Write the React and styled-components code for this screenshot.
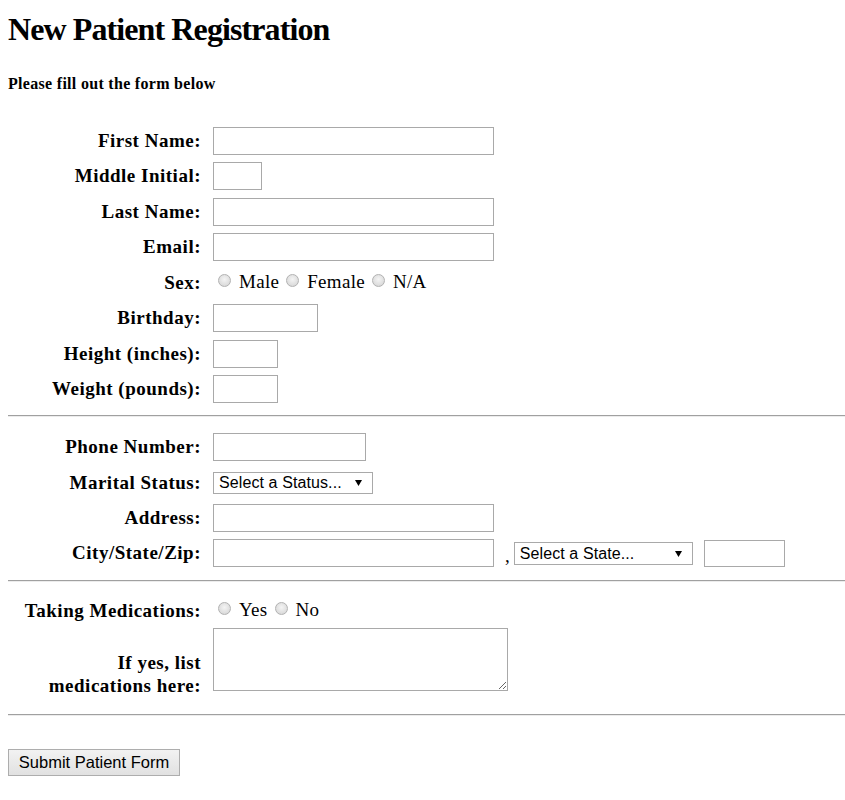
import React from 'react'
import styled, { createGlobalStyle } from 'styled-components'

const GlobalStyle = createGlobalStyle`
  html, body {
    overflow: visible;
  }
  body {
    margin: 8px 0 8px 8px;
    background: #fff;
    color: #000;
    font-family: "Liberation Serif", "Times New Roman", serif;
  }
`

const Title = styled.h1`
  margin: 3px 0 0;
  font-size: 32px;
  line-height: 37px;
  letter-spacing: -0.9px;
  font-weight: bold;
`

const Subtitle = styled.h4`
  margin: 26px 0 0;
  font-size: 16px;
  line-height: 20px;
  letter-spacing: 0.3px;
  font-weight: bold;
`

const Section = styled.div`
  display: grid;
  grid-template-columns: 193px 1fr;
  grid-auto-rows: ${p => p.$rowHeight || '28px'};
  column-gap: 12px;
  row-gap: ${p => p.$gap || '7.45px'};
  margin-top: ${p => p.$top || '0'};
`

const Label = styled.label`
  justify-self: end;
  align-self: ${p => (p.$bottom ? 'end' : 'center')};
  text-align: right;
  font-weight: bold;
  font-size: 19px;
  letter-spacing: 0.5px;
  line-height: ${p => (p.$bottom ? '23px' : '22px')};
  margin-bottom: ${p => (p.$bottom ? '-6px' : '0')};
  white-space: nowrap;
`

const Field = styled.div`
  display: flex;
  align-items: center;
  min-width: 0;
`

const TextInput = styled.input`
  box-sizing: border-box;
  width: ${p => p.$width}px;
  height: ${p => p.$height || 28}px;
  border: 1px solid #a9a9a9;
  padding: 2px 4px;
  font: 16px "Liberation Sans", Arial, sans-serif;
  background: #fff;
  margin: 0;
`

const TextArea = styled.textarea`
  box-sizing: border-box;
  width: 295px;
  height: 63px;
  border: 1px solid #a9a9a9;
  padding: 2px;
  font: 14px "Liberation Mono", monospace;
  margin: 0;
`

const Select = styled.select`
  box-sizing: border-box;
  appearance: none;
  width: ${p => p.$width}px;
  height: ${p => p.$height || 22}px;
  border: 1px solid #a9a9a9;
  padding: 0 20px 0 5px;
  margin: 0;
  font: 16px "Liberation Sans", Arial, sans-serif;
  letter-spacing: 0.1px;
  color: #000;
  background-color: #fff;
  background-image: url("data:image/svg+xml,%3Csvg xmlns='http://www.w3.org/2000/svg' width='7' height='7'%3E%3Cpath d='M0 1h7L3.5 7z' fill='%23000'/%3E%3C/svg%3E");
  background-repeat: no-repeat;
  background-position: right 10px center;
`

const Comma = styled.span`
  font-size: 19px;
  margin: 0 4px 0 11px;
  align-self: flex-end;
  line-height: 22px;
`

const Spacer = styled.span`
  display: inline-block;
  width: ${p => p.$w}px;
  flex: none;
`

const RadioGroup = styled.div`
  display: flex;
  align-items: center;
  font-size: 19px;
  letter-spacing: 0.3px;
  margin-top: -2px;
`

const RadioOption = styled.label`
  display: flex;
  align-items: center;
  margin-right: 2px;
`

const Radio = styled.input.attrs({ type: 'radio' })`
  appearance: none;
  box-sizing: border-box;
  width: 13px;
  height: 13px;
  margin: -3px 8px 0 5px;
  border-radius: 50%;
  border: 1px solid #b2b2b2;
  background: radial-gradient(circle at 50% 40%, #f4f4f4 0%, #dcdcdc 70%, #cfcfcf 100%);
`

const Rule = styled.hr`
  box-sizing: border-box;
  width: 100%;
  margin: ${p => p.$margin};
  border: 0;
  border-top: 1px solid #a0a0a0;
  border-bottom: 1px solid #ececec;
  height: 2px;
`

const SubmitButton = styled.button`
  box-sizing: border-box;
  width: 172px;
  height: 27px;
  margin-top: 33px;
  padding: 0 6px;
  border: 1px solid #adadad;
  border-radius: 0;
  background: linear-gradient(#f2f2f2, #e1e1e1);
  font: 16.5px "Liberation Sans", Arial, sans-serif;
  color: #000;
`

const TextRow = ({ label, width }) => (
  <>
    <Label>{label}</Label>
    <Field>
      <TextInput type="text" $width={width} />
    </Field>
  </>
)

const RadioRow = ({ label, name, options }) => (
  <>
    <Label>{label}</Label>
    <RadioGroup>
      {options.map(o => (
        <RadioOption key={o}>
          <Radio name={name} />
          {o}
        </RadioOption>
      ))}
    </RadioGroup>
  </>
)

export default function App() {
  return (
    <>
      <GlobalStyle />
      <Title>New Patient Registration</Title>
      <Subtitle>Please fill out the form below</Subtitle>

      <form onSubmit={e => e.preventDefault()}>
        <Section $top="33px">
          <TextRow label="First Name:" width={281} />
          <TextRow label="Middle Initial:" width={49} />
          <TextRow label="Last Name:" width={281} />
          <TextRow label="Email:" width={281} />
          <RadioRow label="Sex:" name="sex" options={['Male', 'Female', 'N/A']} />
          <TextRow label="Birthday:" width={105} />
          <TextRow label="Height (inches):" width={65} />
          <TextRow label="Weight (pounds):" width={65} />
        </Section>

        <Rule $margin="12px 0 16px" />

        <Section>
          <TextRow label="Phone Number:" width={153} />
          <Label>Marital Status:</Label>
          <Field>
            <Select $width={160} defaultValue="">
              <option value="">Select a Status...</option>
              <option>Single</option>
              <option>Married</option>
              <option>Divorced</option>
              <option>Widowed</option>
            </Select>
          </Field>
          <TextRow label="Address:" width={281} />
          <Label>City/State/Zip:</Label>
          <Field>
            <TextInput type="text" $width={281} />
            <Comma>,</Comma>
            <Select $width={179} $height={23} defaultValue="">
              <option value="">Select a State...</option>
              <option>Florida</option>
              <option>Georgia</option>
            </Select>
            <Spacer $w={11} />
            <TextInput type="text" $width={81} $height={27} />
          </Field>
        </Section>

        <Rule $margin="13px 0 18px" />

        <Section $rowHeight="auto" $gap="6px">
          <Label>Taking Medications:</Label>
          <RadioGroup>
            <RadioOption>
              <Radio name="meds" />
              Yes
            </RadioOption>
            <RadioOption>
              <Radio name="meds" />
              No
            </RadioOption>
          </RadioGroup>
          <Label $bottom>
            If yes, list
            <br />
            medications here:
          </Label>
          <Field>
            <TextArea />
          </Field>
        </Section>

        <Rule $margin="23px 0 0" />

        <SubmitButton type="submit">Submit Patient Form</SubmitButton>
      </form>
    </>
  )
}
